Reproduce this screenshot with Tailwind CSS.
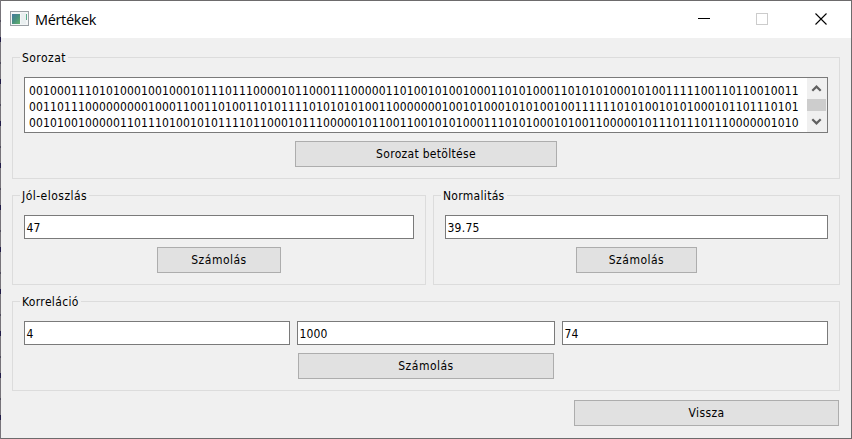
<!DOCTYPE html>
<html lang="hu">
<head>
<meta charset="utf-8">
<title>Mértékek</title>
<script src="https://cdn.jsdelivr.net/npm/@tailwindcss/browser@4"></script>
</head>
<body class="w-[852px] h-[439px] overflow-hidden p-px bg-[#6d6b6c] text-black text-[12px] leading-4 bg-[repeating-linear-gradient(180deg,#77747a_0px,#77747a_20px,#504c5c_20px,#504c5c_22px,#77747a_22px,#77747a_37px,#211c48_37px,#211c48_42px)] bg-no-repeat bg-[length:1px_439px]" style="font-family:'DejaVu Sans Condensed','DejaVu Sans',sans-serif;font-stretch:condensed">
<div class="w-[850px] h-[437px] flex flex-col bg-[#f0f0f0]">
  <header class="h-[37px] shrink-0 bg-white flex items-center pl-[9px]">
    <svg class="w-[19px] h-[16px] shrink-0 -mt-px" viewBox="0 0 19 16">
      <defs><linearGradient id="g" x1="0" y1="0" x2="1" y2="1"><stop offset="0" stop-color="#4679a0"/><stop offset=".5" stop-color="#48917f"/><stop offset="1" stop-color="#66b36b"/></linearGradient></defs>
      <rect x=".5" y=".5" width="18" height="14" fill="#f4f6f7" stroke="#9aa0a5"/>
      <rect x="2" y="3" width="8" height="10" fill="url(#g)"/>
      <rect x="11" y="2" width="5" height="11" fill="#e9eff0"/>
      <path d="M16.5 3v6" stroke="#58ab8a"/>
    </svg>
    <h1 class="ml-[6px] text-[14.5px] leading-5 grow tracking-[-.35px]" style="font-family:'Open Sans','Noto Sans',sans-serif;font-stretch:normal">Mértékek</h1>
    <svg class="w-[130px] h-[14px] shrink-0 mr-[24px] -mt-px" viewBox="0 0 130 14" shape-rendering="crispEdges">
      <path d="M1 6.5h12" stroke="#000"/>
      <rect x="59.5" y="1.5" width="11" height="11" fill="none" stroke="#ccc"/>
      <path d="M118.5 1.5l11 11m0-11l-11 11" stroke="#000" stroke-width="1.1" shape-rendering="auto"/>
    </svg>
  </header>
  <main class="px-[11px] pt-[19px] flex flex-col">
    <section class="h-[122px] border border-[#dcdcdc] flex flex-col">
      <h2 class="w-fit h-4 -mt-2 ml-[7px] px-[2px] bg-[#f0f0f0] tracking-[.45px]">Sorozat</h2>
      <div class="mx-[11px] mt-[11px] h-[56px] border border-[#7a7a7a] bg-white flex justify-between">
        <div class="pl-[4px] pt-[5px] tracking-[.13px] whitespace-pre"><p>00100011101010001001000101110111000010110001110000011010010100100011010100011010101000101001111100110110010011</p><p>00110111000000000100011001101001101011110101010100110000000100101000101010010011111101010010101000101101110101</p><p>00101001000001101110100101011110110001011100000101100110010101000111010100010100110000010111011101110000001010</p></div>
        <div class="w-[20px] h-[54px] shrink-0 bg-[#f0f0f0] flex flex-col justify-between pr-px">
          <svg class="w-[19px] h-[21px]" viewBox="0 0 19 21"><path d="M5.3 12.8l4.2-4.2 4.2 4.2" fill="none" stroke="#606060" stroke-width="2.2"/></svg>
          <div class="h-[12px] bg-[#cdcdcd]"></div>
          <svg class="w-[19px] h-[21px]" viewBox="0 0 19 21"><path d="M5.3 8.2l4.2 4.2 4.2-4.2" fill="none" stroke="#606060" stroke-width="2.2"/></svg>
        </div>
      </div>
      <button class="mt-2 self-center w-[262px] h-[26px] border border-[#adadad] bg-[#e1e1e1] tracking-[.3px]">Sorozat betöltése</button>
    </section>
    <div class="mt-4 flex gap-[7px]">
      <section class="w-[414px] h-[90px] border border-[#dcdcdc] flex flex-col">
        <h2 class="w-fit h-4 -mt-2 ml-[7px] px-[2px] bg-[#f0f0f0] tracking-[.48px]">Jól-eloszlás</h2>
        <div class="mx-[11px] mt-[11px] h-[24px] border border-[#7a7a7a] bg-white pl-[1.5px] pt-[4px] tracking-[.13px]">47</div>
        <button class="mt-2 self-center w-[124px] h-[26px] border border-[#adadad] bg-[#e1e1e1] tracking-[.5px]">Számolás</button>
      </section>
      <section class="w-[407px] h-[90px] border border-[#dcdcdc] flex flex-col">
        <h2 class="w-fit h-4 -mt-2 ml-[7px] px-[2px] bg-[#f0f0f0] tracking-[.3px]">Normalitás</h2>
        <div class="mx-[11px] mt-[11px] h-[24px] border border-[#7a7a7a] bg-white pl-[1.5px] pt-[4px] tracking-[.25px]">39.75</div>
        <button class="mt-2 ml-[142px] w-[121px] h-[26px] border border-[#adadad] bg-[#e1e1e1] tracking-[.5px]">Számolás</button>
      </section>
    </div>
    <section class="mt-4 h-[90px] border border-[#dcdcdc] flex flex-col">
      <h2 class="w-fit h-4 -mt-2 ml-[7px] px-[2px] bg-[#f0f0f0] tracking-[.35px]">Korreláció</h2>
      <div class="mx-[11px] mt-[11px] flex gap-[7px] tracking-[.13px]">
        <div class="w-[266px] h-[24px] border border-[#7a7a7a] bg-white pl-[1.5px] pt-[4px]">4</div>
        <div class="w-[258px] h-[24px] border border-[#7a7a7a] bg-white pl-[1.5px] pt-[4px]">1000</div>
        <div class="w-[266px] h-[24px] border border-[#7a7a7a] bg-white pl-[1.5px] pt-[4px]">74</div>
      </div>
      <button class="mt-2 self-center w-[256px] h-[26px] border border-[#adadad] bg-[#e1e1e1] tracking-[.5px]">Számolás</button>
    </section>
    <button class="mt-[9px] mr-px self-end w-[265px] h-[26px] border border-[#adadad] bg-[#e1e1e1] tracking-[.4px]">Vissza</button>
  </main>
</div>
</body>
</html>
